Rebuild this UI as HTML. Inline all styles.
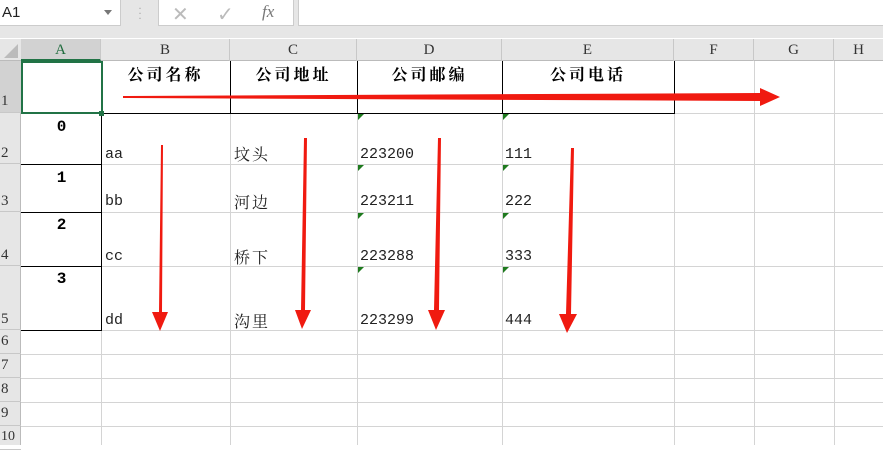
<!DOCTYPE html><html><head><meta charset="utf-8"><style>
*{margin:0;padding:0;box-sizing:border-box}
body{width:883px;height:445px;overflow:hidden;background:#fff;font-family:"Liberation Serif","Noto Serif CJK SC",serif;position:relative}
.a{position:absolute}
.vl{position:absolute;width:1px;background:#d4d4d4}
.hl{position:absolute;height:1px;background:#d4d4d4}
.ch{position:absolute;top:39px;height:22px;line-height:22px;text-align:center;font-size:15px;color:#333;border-right:1px solid #c8c8c8}
.rh{position:absolute;left:0;width:21px;font-size:15px;color:#333;padding-left:1px;border-bottom:1px solid #c8c8c8}
.t{position:absolute;font-size:15px;color:#222;font-family:"Liberation Mono","Noto Serif CJK SC",monospace}
.c{position:absolute;font-size:16px;color:#222;letter-spacing:2px;font-family:"Noto Serif CJK SC",serif}
.b{position:absolute;font-weight:bold;font-size:16px;letter-spacing:3px;text-align:center;color:#000;font-family:"Liberation Serif","Noto Serif CJK SC",serif}
.n{position:absolute;font-weight:bold;font-size:16px;text-align:center;color:#000;font-family:"Liberation Mono",monospace}
.g{position:absolute;width:0;height:0;border-top:6px solid #1e7a1e;border-right:6px solid transparent}
</style></head><body>
<div class="a" style="left:0;top:0;width:883px;height:38px;background:#e6e6e6"></div>
<div class="a" style="left:0;top:0;width:121px;height:26px;background:#fff;border-right:1px solid #ccc;border-bottom:1px solid #ccc;font-family:'Liberation Sans',sans-serif;font-size:15px;line-height:26px;padding-left:2px;color:#222">A1</div>
<div class="a" style="left:104px;top:10px;border-top:5px solid #777;border-left:4px solid transparent;border-right:4px solid transparent"></div>
<div class="a" style="left:138px;top:6px;color:#aaa;font-size:12px;line-height:5px">·<br>·<br>·</div>
<div class="a" style="left:158px;top:0;width:136px;height:26px;background:#fff;border:1px solid #ccc;border-top:none"></div>
<div class="a" style="left:172px;top:2px;color:#bbb;font-size:20px;font-family:'Liberation Sans',sans-serif">✕</div>
<div class="a" style="left:217px;top:2px;color:#bbb;font-size:20px;font-family:'DejaVu Sans',sans-serif">✓</div>
<div class="a" style="left:262px;top:2px;color:#777;font-size:17px;font-style:italic">fx</div>
<div class="a" style="left:298px;top:0;width:585px;height:26px;background:#fff;border-left:1px solid #ccc;border-bottom:1px solid #ccc"></div>
<div class="a" style="left:0;top:39px;width:883px;height:22px;background:#e6e6e6;border-bottom:1px solid #bbb"></div>
<div class="a" style="left:0;top:61px;width:21px;height:384px;background:#e6e6e6;border-right:1px solid #bbb"></div>
<div class="a" style="left:4px;top:44px;width:0;height:0;border-bottom:14px solid #bbb;border-left:14px solid transparent"></div>
<div class="ch" style="left:21px;width:80px;background:#d2d2d2;color:#1e6b3c;border-bottom:2px solid #217346">A</div>
<div class="ch" style="left:101px;width:129px">B</div>
<div class="ch" style="left:230px;width:127px">C</div>
<div class="ch" style="left:357px;width:145px">D</div>
<div class="ch" style="left:502px;width:172px">E</div>
<div class="ch" style="left:674px;width:80px">F</div>
<div class="ch" style="left:754px;width:80px">G</div>
<div class="ch" style="left:834px;width:49px;border:none">H</div>
<div class="rh" style="top:61px;height:52px;padding-top:32px;background:#d2d2d2">1</div>
<div class="rh" style="top:113px;height:51px;padding-top:32px">2</div>
<div class="rh" style="top:164px;height:48px;padding-top:29px">3</div>
<div class="rh" style="top:212px;height:54px;padding-top:35px">4</div>
<div class="rh" style="top:266px;height:64px;padding-top:45px">5</div>
<div class="rh" style="top:330px;height:24px;padding-top:3px">6</div>
<div class="rh" style="top:354px;height:24px;padding-top:3px">7</div>
<div class="rh" style="top:378px;height:24px;padding-top:3px">8</div>
<div class="rh" style="top:402px;height:24px;padding-top:3px">9</div>
<div class="rh" style="top:426px;height:24px;padding-top:3px;font-size:14px">10</div>
<div class="vl" style="left:101px;top:61px;height:384px"></div>
<div class="vl" style="left:230px;top:61px;height:384px"></div>
<div class="vl" style="left:357px;top:61px;height:384px"></div>
<div class="vl" style="left:502px;top:61px;height:384px"></div>
<div class="vl" style="left:674px;top:61px;height:384px"></div>
<div class="vl" style="left:754px;top:61px;height:384px"></div>
<div class="vl" style="left:834px;top:61px;height:384px"></div>
<div class="hl" style="left:21px;top:113px;width:862px"></div>
<div class="hl" style="left:21px;top:164px;width:862px"></div>
<div class="hl" style="left:21px;top:212px;width:862px"></div>
<div class="hl" style="left:21px;top:266px;width:862px"></div>
<div class="hl" style="left:21px;top:330px;width:862px"></div>
<div class="hl" style="left:21px;top:354px;width:862px"></div>
<div class="hl" style="left:21px;top:378px;width:862px"></div>
<div class="hl" style="left:21px;top:402px;width:862px"></div>
<div class="hl" style="left:21px;top:426px;width:862px"></div>
<div class="a" style="left:101px;top:61px;width:574px;height:53px;border:1px solid #000;border-top:none"></div>
<div class="a" style="left:230px;top:61px;width:1px;height:53px;background:#000"></div>
<div class="a" style="left:357px;top:61px;width:1px;height:53px;background:#000"></div>
<div class="a" style="left:502px;top:61px;width:1px;height:53px;background:#000"></div>
<div class="a" style="left:21px;top:113px;width:81px;height:218px;border:1px solid #000;border-left:none"></div>
<div class="a" style="left:21px;top:164px;width:80px;height:1px;background:#000"></div>
<div class="a" style="left:21px;top:212px;width:80px;height:1px;background:#000"></div>
<div class="a" style="left:21px;top:266px;width:80px;height:1px;background:#000"></div>
<div class="a" style="left:21px;top:61px;width:82px;height:53px;border:2px solid #217346"></div>
<div class="a" style="left:99px;top:111px;width:5px;height:5px;background:#217346"></div>
<div class="b" style="left:101px;top:62px;width:129px">公司名称</div>
<div class="b" style="left:230px;top:62px;width:127px">公司地址</div>
<div class="b" style="left:357px;top:62px;width:145px">公司邮编</div>
<div class="b" style="left:502px;top:62px;width:172px">公司电话</div>
<div class="n" style="left:21px;top:118px;width:81px">0</div>
<div class="n" style="left:21px;top:169px;width:81px">1</div>
<div class="n" style="left:21px;top:216px;width:81px">2</div>
<div class="n" style="left:21px;top:270px;width:81px">3</div>
<div class="t" style="left:105px;top:146px">aa</div>
<div class="t" style="left:105px;top:193px">bb</div>
<div class="t" style="left:105px;top:248px">cc</div>
<div class="t" style="left:105px;top:312px">dd</div>
<div class="c" style="left:234px;top:142px">坟头</div>
<div class="c" style="left:234px;top:190px">河边</div>
<div class="c" style="left:234px;top:245px">桥下</div>
<div class="c" style="left:234px;top:309px">沟里</div>
<div class="t" style="left:360px;top:146px">223200</div>
<div class="t" style="left:360px;top:193px">223211</div>
<div class="t" style="left:360px;top:248px">223288</div>
<div class="t" style="left:360px;top:312px">223299</div>
<div class="t" style="left:505px;top:146px">111</div>
<div class="t" style="left:505px;top:193px">222</div>
<div class="t" style="left:505px;top:248px">333</div>
<div class="t" style="left:505px;top:312px">444</div>
<div class="g" style="left:358px;top:114px"></div><div class="g" style="left:503px;top:114px"></div>
<div class="g" style="left:358px;top:165px"></div><div class="g" style="left:503px;top:165px"></div>
<div class="g" style="left:358px;top:213px"></div><div class="g" style="left:503px;top:213px"></div>
<div class="g" style="left:358px;top:267px"></div><div class="g" style="left:503px;top:267px"></div>
<svg class="a" style="left:0;top:0" width="883" height="445">
<g fill="#f01a10">
<polygon points="123,96 760,93 760,88 780,97 760,106 760,101 123,98"/>
<polygon points="161,145 163,145 162,312 168,312 160,331 152,312 159,312"/>
<polygon points="304,138 307,138 305,310 311,310 302,329 295,310 301,310"/>
<polygon points="438,138 441,138 439,310 445,310 436,330 428,310 434,310"/>
<polygon points="571,148 574,148 571,314 577,314 567,333 559,314 566,314"/>
</g></svg>
</body></html>
